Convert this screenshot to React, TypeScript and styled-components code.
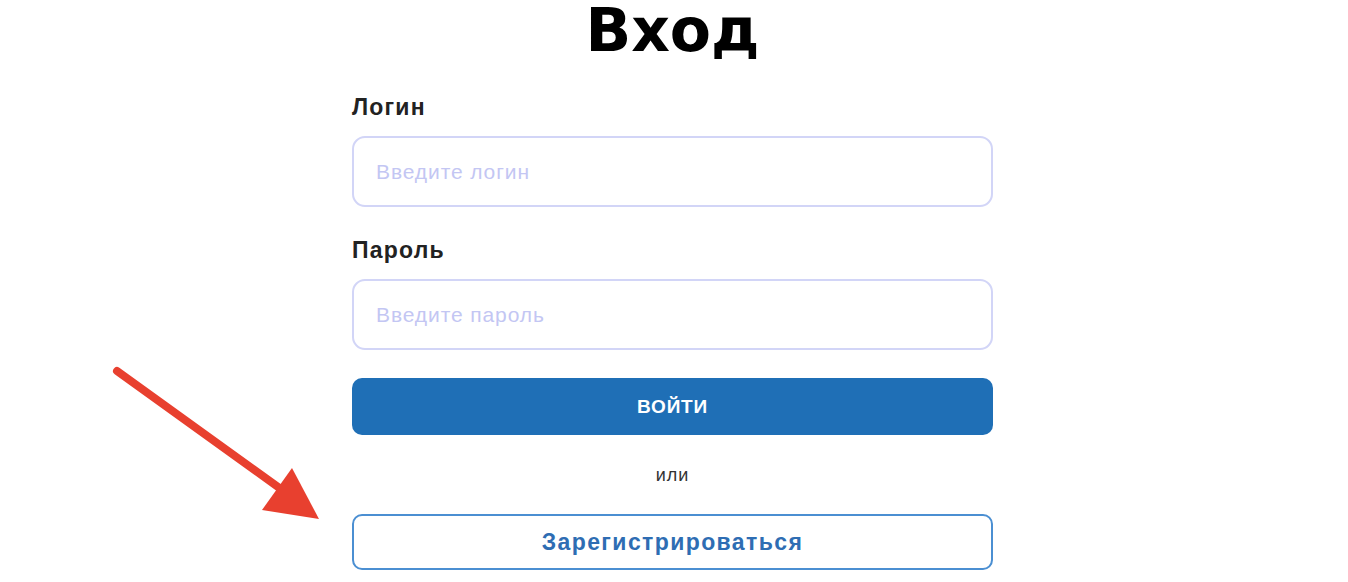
import styled, { createGlobalStyle } from 'styled-components';

const GlobalStyle = createGlobalStyle`
  body {
    margin: 0;
    background: #fff;
    font-family: "Liberation Sans", Arial, sans-serif;
  }
`;

const Page = styled.div`
  position: relative;
  box-sizing: border-box;
  width: 100%;
  height: 582px;
  padding: 1px 3px 0 0;
  overflow: hidden;
`;

const Form = styled.form`
  width: 641px;
  margin: 0 auto;
  display: flex;
  flex-direction: column;
`;

const Title = styled.h1`
  margin: -2px 0 0;
  font-family: "DejaVu Sans", "Liberation Sans", sans-serif;
  font-size: 60px;
  line-height: 62px;
  font-weight: 700;
  color: #000;
  text-align: center;
`;

const Field = styled.div<{ $top: number }>`
  display: flex;
  flex-direction: column;
  margin-top: ${(p) => p.$top}px;
`;

const Label = styled.label`
  font-size: 23px;
  line-height: 24px;
  letter-spacing: 1.2px;
  font-weight: 700;
  color: #222;
  margin-bottom: 17px;
`;

const Input = styled.input`
  box-sizing: border-box;
  height: 71px;
  width: 100%;
  border: 2px solid #d2d5f7;
  border-radius: 13px;
  padding: 0 22px;
  font-family: inherit;
  font-size: 21px;
  letter-spacing: 0.9px;
  outline: none;

  &::placeholder {
    color: #c3c6f3;
  }
`;

const PrimaryButton = styled.button`
  margin-top: 28px;
  height: 57px;
  border: none;
  border-radius: 10px;
  background: #1f6fb6;
  color: #fff;
  font-family: inherit;
  font-size: 19px;
  letter-spacing: 0.8px;
  font-weight: 700;
  cursor: pointer;
`;

const Divider = styled.div`
  margin-top: 29px;
  font-size: 18px;
  line-height: 22px;
  letter-spacing: 1px;
  color: #333;
  text-align: center;
`;

const OutlineButton = styled.button`
  margin-top: 28px;
  height: 56px;
  border: 2px solid #4b8fd2;
  border-radius: 10px;
  background: #fff;
  color: #2e6db3;
  font-family: inherit;
  font-size: 23px;
  letter-spacing: 1.4px;
  font-weight: 700;
  cursor: pointer;
`;

const Arrow = styled.svg`
  position: absolute;
  left: 0;
  top: 0;
  pointer-events: none;
`;

export default function App() {
  return (
    <Page>
      <GlobalStyle />
      <Form onSubmit={(e) => e.preventDefault()}>
        <Title>Вход</Title>
        <Field $top={34}>
          <Label>Логин</Label>
          <Input placeholder="Введите логин" />
        </Field>
        <Field $top={31}>
          <Label>Пароль</Label>
          <Input type="password" placeholder="Введите пароль" />
        </Field>
        <PrimaryButton type="submit">ВОЙТИ</PrimaryButton>
        <Divider>или</Divider>
        <OutlineButton type="button">Зарегистрироваться</OutlineButton>
      </Form>
      <Arrow width="360" height="540" viewBox="0 0 360 540">
        <line x1="117" y1="371" x2="285" y2="492" stroke="#e8402f" strokeWidth="8" strokeLinecap="round" />
        <polygon points="319,519 262,510 292,468" fill="#e8402f" />
      </Arrow>
    </Page>
  );
}
